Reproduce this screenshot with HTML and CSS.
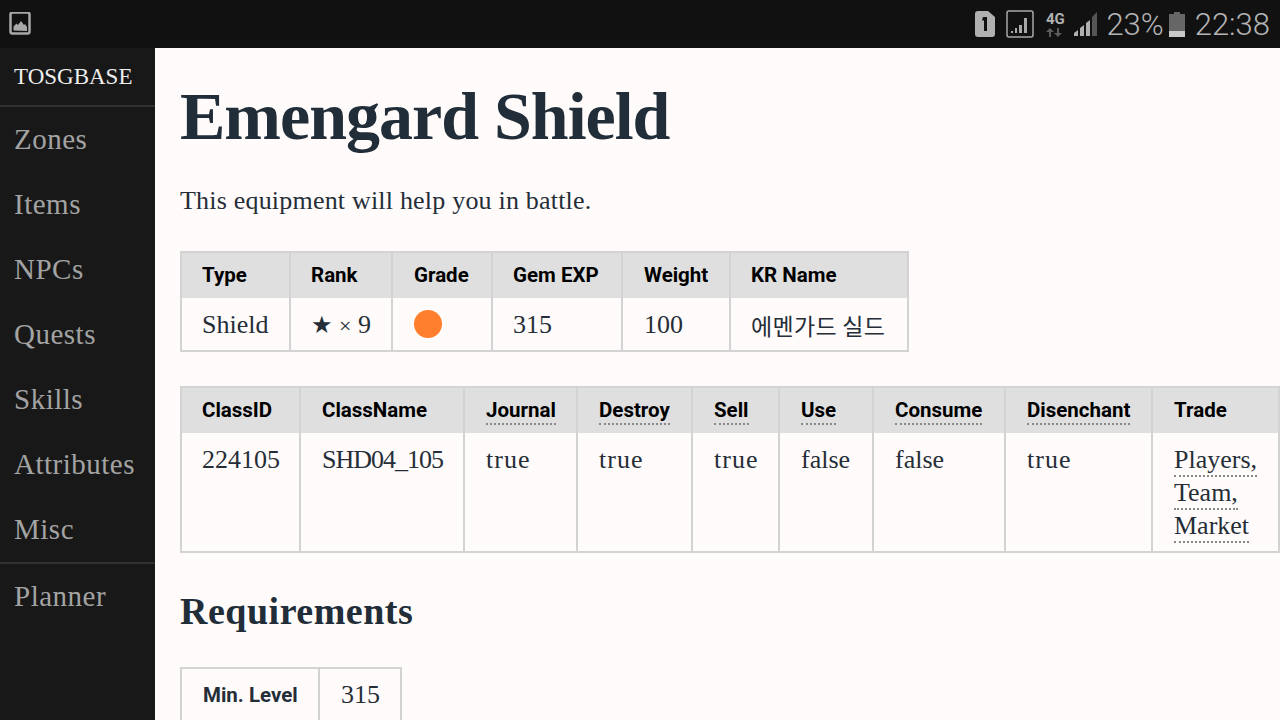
FILE: index.html
```html
<!doctype html>
<html lang="en" dir="ltr">
<head>
  <meta charset="utf-8" />
  <title>Emengard Shield</title>
  <link rel="stylesheet" href="styles.css">
</head>
<body>

<header class="status-bar">
  <svg class="icon-gallery" width="24" height="24" viewBox="0 1 24 24">
    <rect x="1.5" y="1.5" width="19" height="21" rx="2" fill="none" stroke="#a8a8a8" stroke-width="2.5"/>
    <path d="M4.500 19.500v-4l3-3 1.500 1.500 3-4 3 4 1-1 2 3v4z" fill="#a8a8a8"/>
  </svg>
  <div class="status-right">
    <svg width="20" height="26" viewBox="0 0 20 26">
      <path d="M3 0h10l7 6v17a3 3 0 0 1-3 3H3a3 3 0 0 1-3-3V3a3 3 0 0 1 3-3z" fill="#b0b0b0"/>
      <path d="M8 6h4v14H9V9.500H7z" fill="#111"/>
    </svg>
    <svg class="gap-signal" width="28" height="28" viewBox="0 0 28 28">
      <rect x="1" y="1" width="26" height="26" rx="2" fill="none" stroke="#a8a8a8" stroke-width="1.500"/>
      <path d="M5 23h2v-2H5zM9 23h2v-5H9zM13 23h3v-8h-3zM18 23h3V8h-3z" fill="#a8a8a8"/>
    </svg>
    <div class="net gap-net">
      <span class="net-label">4G</span>
      <svg width="18" height="10" viewBox="0 0 18 10">
        <path d="M3 10V5H0l4-4 4 4H5v5zM13 1v5h3l-4 4-4-4h3V1z" fill="#5c5c5c"/>
      </svg>
    </div>
    <svg class="gap-bars" width="24" height="26" viewBox="0 0 24 26">
      <path d="M0 25v-3l4-3v6zM6 25v-8l4-3v11zM12 25V12l4-3v16z" fill="#b0b0b0"/>
      <path d="M18 25V6l5-5v24z" fill="#555"/>
    </svg>
    <span class="status-text gap-pct">23%</span>
    <svg class="gap-batt" width="16" height="26" viewBox="0 0 16 26">
      <path d="M5 1h6v2h5v23H0V3h5z" fill="#666"/>
      <rect y="20" width="16" height="6" fill="#c8c8c8"/>
    </svg>
    <span class="status-text gap-time">22:38</span>
  </div>
</header>

<div class="app">
  <nav class="sidebar">
    <a class="brand">TOSGBASE</a>
    <ul class="nav-list">
      <li>Zones</li>
      <li>Items</li>
      <li>NPCs</li>
      <li>Quests</li>
      <li>Skills</li>
      <li>Attributes</li>
      <li>Misc</li>
    </ul>
    <ul class="nav-list nav-bottom">
      <li>Planner</li>
    </ul>
  </nav>

  <main class="content">
    <h1>Emengard Shield</h1>
    <p class="lead">This equipment will help you in battle.</p>

    <table class="info info-a">
      <colgroup>
        <col class="a1"><col class="a2"><col class="a3"><col class="a4"><col class="a5"><col class="a6">
      </colgroup>
      <thead>
        <tr><th>Type</th><th>Rank</th><th>Grade</th><th>Gem EXP</th><th>Weight</th><th>KR Name</th></tr>
      </thead>
      <tbody>
        <tr>
          <td>Shield</td>
          <td><span class="star">★</span> <span class="times">×</span> 9</td>
          <td><span class="grade-dot"></span></td>
          <td>315</td>
          <td>100</td>
          <td class="korean">에멘가드 실드</td>
        </tr>
      </tbody>
    </table>

    <table class="info info-b">
      <colgroup>
        <col class="b1"><col class="b2"><col class="b3"><col class="b4"><col class="b5"><col class="b6"><col class="b7"><col class="b8"><col class="b9">
      </colgroup>
      <thead>
        <tr>
          <th>ClassID</th>
          <th>ClassName</th>
          <th><abbr>Journal</abbr></th>
          <th><abbr>Destroy</abbr></th>
          <th><abbr>Sell</abbr></th>
          <th><abbr>Use</abbr></th>
          <th><abbr>Consume</abbr></th>
          <th><abbr>Disenchant</abbr></th>
          <th>Trade</th>
        </tr>
      </thead>
      <tbody>
        <tr>
          <td>224105</td>
          <td class="tight">SHD04_105</td>
          <td class="wide">true</td>
          <td class="wide">true</td>
          <td class="wide">true</td>
          <td>false</td>
          <td>false</td>
          <td class="wide">true</td>
          <td class="trade"><abbr>Players,</abbr><br><abbr>Team,</abbr><br><abbr>Market</abbr></td>
        </tr>
      </tbody>
    </table>

    <h2>Requirements</h2>

    <table class="info info-c">
      <colgroup>
        <col class="c1"><col class="c2">
      </colgroup>
      <tbody>
        <tr><th>Min. Level</th><td>315</td></tr>
      </tbody>
    </table>
  </main>
</div>

</body>
</html>
```

FILE: styles.css
```css
html,
body {
  margin: 0;
  height: 100%;
  overflow: hidden;
}
body {
  font-family: "Liberation Serif", "Noto Sans CJK KR", serif;
  background-color: #fffbfa;
  color: #252e38;
}
.status-bar {
  height: 48px;
  background-color: #111;
  display: flex;
  align-items: center;
  justify-content: space-between;
  padding: 0 10px 0 9px;
}
.status-right {
  display: flex;
  align-items: center;
}
.status-text {
  font-family: Roboto, sans-serif;
  font-size: 31px;
  font-weight: 300;
  color: #b4b4b4;
}
.gap-signal { margin-left: 11px; }
.gap-net { margin-left: 11px; }
.gap-bars { margin-left: 9px; }
.gap-pct { margin-left: 8px; }
.gap-batt { margin-left: 5px; }
.gap-time { margin-left: 10px; }
.net {
  width: 20px;
  display: flex;
  flex-direction: column;
  align-items: center;
}
.net-label {
  font-family: Roboto, sans-serif;
  font-size: 15px;
  line-height: 15px;
  font-weight: 700;
  color: #b0b0b0;
}
.app {
  display: flex;
  height: 672px;
}
.sidebar {
  width: 155px;
  flex: none;
  background-color: #181818;
}
.brand {
  display: block;
  height: 57px;
  line-height: 57px;
  padding-left: 14px;
  font-size: 23px;
  color: #eee;
  border-bottom: 2px solid #303030;
  box-sizing: content-box;
}
.nav-list {
  list-style: none;
  margin: 0;
  padding: 0;
}
.nav-list li {
  height: 65px;
  line-height: 65px;
  padding-left: 14px;
  font-size: 29px;
  letter-spacing: 0.5px;
  color: #a3a3a3;
}
.nav-bottom {
  border-top: 2px solid #303030;
}
.content {
  flex: 1;
  padding: 0 0 0 25px;
  min-width: 0;
}
h1 {
  margin: 28px 0 0;
  font-size: 68px;
  line-height: 80px;
  letter-spacing: -1px;
  font-weight: 700;
  color: #212d38;
}
.lead {
  margin: 27px 0 0;
  font-size: 26px;
  line-height: 36px;
  letter-spacing: 0.2px;
}
.info {
  border-collapse: collapse;
  table-layout: fixed;
  font-size: 26px;
}
.info th,
.info td {
  border: 2px solid #d3d3d3;
  padding: 0 20px;
  text-align: left;
}
.info thead th {
  height: 43px;
  padding-bottom: 2px;
  background-color: #dfdfdf;
  border-bottom: 0;
  font-family: Roboto, sans-serif;
  font-size: 20.5px;
  font-weight: 700;
  color: #000;
}
.info thead + tbody td {
  border-top: 0;
}
abbr {
  border-bottom: 2px dotted #888;
  padding-bottom: 1px;
}
.info-a {
  margin-top: 32px;
  width: 727px;
}
.info-a td {
  height: 50px;
  padding-top: 2px;
}
.info-a th:nth-child(3),
.info-a td:nth-child(3),
.info-a th:nth-child(5),
.info-a td:nth-child(5) {
  padding-left: 21px;
}
.a1 { width: 109px; }
.a2 { width: 102px; }
.a3 { width: 100px; }
.a4 { width: 130px; }
.a5 { width: 108px; }
.a6 { width: 178px; }
.star { font-family: "DejaVu Sans", sans-serif; font-size: 24px; }
.times { font-size: 22px; }
.grade-dot {
  display: block;
  width: 28px;
  height: 28px;
  margin-bottom: 2px;
  border-radius: 50%;
  background-color: #ff7f2d;
}
.korean {
  font-family: "Noto Sans CJK KR", sans-serif;
  font-size: 23px;
  letter-spacing: 0.3px;
}
.info-b {
  margin-top: 34px;
  width: 1098px;
}
.info-b th + th,
.info-b td + td {
  padding-left: 21px;
}
.info-b td {
  height: 119px;
  vertical-align: top;
  padding-top: 10px;
  box-sizing: border-box;
  line-height: 33px;
}
.tight { letter-spacing: -1px; }
.wide { letter-spacing: 1px; }
.b1 { width: 119px; }
.b2 { width: 164px; }
.b3 { width: 113px; }
.b4 { width: 115px; }
.b5 { width: 87px; }
.b6 { width: 94px; }
.b7 { width: 132px; }
.b8 { width: 147px; }
.b9 { width: 127px; }
h2 {
  margin: 36px 0 0;
  font-size: 38px;
  line-height: 44px;
  letter-spacing: 0.5px;
  font-weight: 700;
  color: #212d38;
}
.info-c {
  margin-top: 34px;
  width: 220px;
}
.c1 { width: 138px; }
.c2 { width: 82px; }
.info-c th,
.info-c td {
  height: 52px;
  padding-left: 21px;
}
.info-c th {
  font-family: Roboto, sans-serif;
  font-size: 20.5px;
  font-weight: 700;
}
```
